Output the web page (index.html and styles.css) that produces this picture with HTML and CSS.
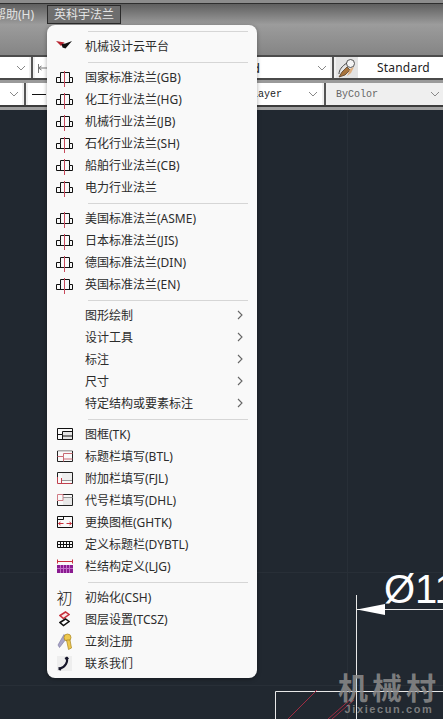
FILE: index.html
```html
<!DOCTYPE html>
<html lang="zh-CN">
<head>
    <meta charset="UTF-8">
    <meta name="viewport" content="width=device-width, initial-scale=1.0">
    <title>英科宇法兰</title>
    <link rel="stylesheet" href="styles.css">
</head>
<body>
    <svg class="defs" width="0" height="0">
        <symbol id="flange" viewBox="0 0 17 22">
            <path d="M.5 16.500v-5h4v-5h9v5h3v5z M4.500 11.500v5 M13.500 11.500v5" fill="none" stroke="#111"/>
            <path d="M8.500 5v16" stroke="#c8485a"/>
        </symbol>
        <symbol id="arrow" viewBox="0 0 6 10">
            <path d="M1 1l4 4-4 4" fill="none" stroke="#666" stroke-width="1.1"/>
        </symbol>
        <symbol id="down" viewBox="0 0 10 6">
            <path d="M1 1l4 4 4-4" fill="none" stroke="#888"/>
        </symbol>
    </svg>

    <div class="app">
        <div class="top-strip"></div>
        <div class="menubar">
            <span class="menubar-item clipped">帮助(H)</span>
            <span class="menubar-item active">英科宇法兰</span>
        </div>
        <div class="ribbon"></div>

        <div class="toolbar first">
            <div class="field w-28"><svg class="caret"><use href="#down"/></svg></div>
            <i class="divider"></i>
            <div class="field w-rest-1">
                <svg class="dim-icon" width="12" height="12" viewBox="0 0 12 12"><path d="M.5 2v9 M.5 6h11 M.5 6l3-2 M.5 6l3 2" fill="none" stroke="#777"/></svg>
                <span class="spacer"></span>
                <span class="field-text">rd</span>
                <svg class="caret"><use href="#down"/></svg>
            </div>
            <i class="divider"></i>
            <div class="brush">
                <svg width="20" height="20" viewBox="0 0 20 20">
                    <circle cx="13.500" cy="5.500" r="4" fill="#f4f4f4" stroke="#555"/>
                    <path d="M10 9l-5 5-3 5 6-2 5-5z" fill="#a8743c" stroke="#5a4028" stroke-width=".8"/>
                    <path d="M2 16c0-4 3-8 8-11" fill="none" stroke="#444"/>
                    <path d="M13 11l4-2-3 6-4 3z" fill="#e0b080"/>
                </svg>
            </div>
            <div class="field grow center">Standard</div>
        </div>
        <div class="toolbar-gap"></div>

        <div class="toolbar second">
            <div class="field w-20"><svg class="caret"><use href="#down"/></svg></div>
            <i class="divider"></i>
            <div class="field w-rest-2">
                <span class="line-sample"></span>
                <span class="spacer"></span>
                <span class="mono dark">Layer</span>
                <svg class="caret"><use href="#down"/></svg>
            </div>
            <i class="divider"></i>
            <div class="field grow disabled">
                <span class="mono">ByColor</span>
                <span class="spacer"></span>
                <svg class="caret"><use href="#down"/></svg>
            </div>
        </div>
        <div class="under-bar"></div>

        <div class="drawing">
            <svg class="sheet" width="443" height="609" viewBox="0 110 443 609">
                <path d="M0 572.500H443 M0 685.500H443 M347.500 110V719" stroke="#282f37"/>
                <path d="M356.500 595V719 M357 609.500H443 M275.500 719V691.500H443" fill="none" stroke="#e8e8e8"/>
                <path d="M357 609.500L385 604V615z" fill="#fff"/>
                <path d="M288 719L317 690 M328 719L352 698 M332 719L354 700" stroke="#a02c42"/>
                <text class="dim-text" x="384" y="603">Ø11</text>
            </svg>
            <div class="watermark">
                <div class="wm-big">机械村</div>
                <div class="wm-small">Jixiecun.com</div>
            </div>
        </div>

        <div class="menu">
            <div class="sep"></div>
            <div class="item">
                <span class="ico"><svg width="17" height="10" viewBox="0 0 17 10"><path d="M0 0l8.500 1.500L5 5z" fill="#b8242f"/><path d="M5.500 3l4-.5L16 0l-6.500 7.500-3-1z" fill="#111"/></svg></span>
                <span>机械设计云平台</span>
            </div>
            <div class="sep"></div>
            <div class="item"><span class="ico"><svg width="17" height="22"><use href="#flange"/></svg></span><span>国家标准法兰(GB)</span></div>
            <div class="item"><span class="ico"><svg width="17" height="22"><use href="#flange"/></svg></span><span>化工行业法兰(HG)</span></div>
            <div class="item"><span class="ico"><svg width="17" height="22"><use href="#flange"/></svg></span><span>机械行业法兰(JB)</span></div>
            <div class="item"><span class="ico"><svg width="17" height="22"><use href="#flange"/></svg></span><span>石化行业法兰(SH)</span></div>
            <div class="item"><span class="ico"><svg width="17" height="22"><use href="#flange"/></svg></span><span>船舶行业法兰(CB)</span></div>
            <div class="item"><span class="ico"><svg width="17" height="22"><use href="#flange"/></svg></span><span>电力行业法兰</span></div>
            <div class="sep"></div>
            <div class="item"><span class="ico"><svg width="17" height="22"><use href="#flange"/></svg></span><span>美国标准法兰(ASME)</span></div>
            <div class="item"><span class="ico"><svg width="17" height="22"><use href="#flange"/></svg></span><span>日本标准法兰(JIS)</span></div>
            <div class="item"><span class="ico"><svg width="17" height="22"><use href="#flange"/></svg></span><span>德国标准法兰(DIN)</span></div>
            <div class="item"><span class="ico"><svg width="17" height="22"><use href="#flange"/></svg></span><span>英国标准法兰(EN)</span></div>
            <div class="sep"></div>
            <div class="item"><span class="ico"></span><span>图形绘制</span><svg class="more"><use href="#arrow"/></svg></div>
            <div class="item"><span class="ico"></span><span>设计工具</span><svg class="more"><use href="#arrow"/></svg></div>
            <div class="item"><span class="ico"></span><span>标注</span><svg class="more"><use href="#arrow"/></svg></div>
            <div class="item"><span class="ico"></span><span>尺寸</span><svg class="more"><use href="#arrow"/></svg></div>
            <div class="item"><span class="ico"></span><span>特定结构或要素标注</span><svg class="more"><use href="#arrow"/></svg></div>
            <div class="sep"></div>
            <div class="item">
                <span class="ico"><svg width="16" height="12" viewBox="0 0 16 12"><path d="M6 4h9v7H6z" fill="#e4e4e4"/><path d="M.5.500h15v11H.5z M.5 6.500h5v-3h10 M5.500 6.500v5 M5.500 8h10" fill="none" stroke="#111"/></svg></span>
                <span>图框(TK)</span>
            </div>
            <div class="item">
                <span class="ico"><svg width="16" height="12" viewBox="0 0 16 12"><path d="M.5.500h15" stroke="#aaa" stroke-width="2"/><path d="M.5 1v10.500h15V1" fill="none" stroke="#222"/><path d="M.5 6.500h6v-3h9 M6.500 6.500v5 M6.500 9h9" fill="none" stroke="#c86a74"/></svg></span>
                <span>标题栏填写(BTL)</span>
            </div>
            <div class="item">
                <span class="ico"><svg width="16" height="12" viewBox="0 0 16 12"><path d="M5 1h10v8H5z" fill="#eee"/><path d="M.5 6V.500h15v11H5" fill="none" stroke="#222"/><path d="M.5 5v6.500h14 M4.500 6v5.500" fill="none" stroke="#c0404e"/><path d="M5 8.500h10" stroke="#999"/></svg></span>
                <span>附加栏填写(FJL)</span>
            </div>
            <div class="item">
                <span class="ico"><svg width="16" height="12" viewBox="0 0 16 12"><path d="M6 4h9v7H6z" fill="#e8e8e8"/><path d="M.5 7v4.500h15V.500H6" fill="none" stroke="#222"/><path d="M.5 6.500V.500h5.500v3 M.5 6.500h5.500v-3" fill="none" stroke="#d07a84"/><path d="M6 3.500h9.500" stroke="#999"/></svg></span>
                <span>代号栏填写(DHL)</span>
            </div>
            <div class="item">
                <span class="ico"><svg width="16" height="12" viewBox="0 0 16 12"><path d="M.5.500h15v11H.5z M.5 3.500h6v-3" fill="none" stroke="#111"/><path d="M1.500 7.500h5 M1.500 7.500l2-1.500 M1.500 7.500l2 1.500 M9.500 7.500h5 M14.500 7.500l-2-1.500 M14.500 7.500l-2 1.500" fill="none" stroke="#c8303c"/></svg></span>
                <span>更换图框(GHTK)</span>
            </div>
            <div class="item">
                <span class="ico"><svg width="16" height="7" viewBox="0 0 16 7"><path d="M.5.500h15v6H.5z M.5 3.500h15 M3.500.500v6 M6.500.500v6 M9.500.500v6 M12.500.500v6" fill="none" stroke="#111"/></svg></span>
                <span>定义标题栏(DYBTL)</span>
            </div>
            <div class="item">
                <span class="ico"><svg width="16" height="14" viewBox="0 0 16 14"><path d="M.5 4.500V.500M15.500 4.500V.500M.5 2.500h15" fill="none" stroke="#c8303c"/><path d="M0 6h16v8H0z" fill="#8a1a90"/><path d="M0 9.500h16M3.500 6v8M6.500 6v8M9.500 6v8M12.500 6v8" stroke="#c070c8"/></svg></span>
                <span>栏结构定义(LJG)</span>
            </div>
            <div class="sep"></div>
            <div class="item"><span class="ico glyph">初</span><span>初始化(CSH)</span></div>
            <div class="item">
                <span class="ico"><svg width="11" height="16" viewBox="0 0 11 16"><path d="M1 4.500L6.500 1 10 3.500 4.500 7.500z" fill="#f8e8e8" stroke="#c8303c" stroke-width="1.500"/><path d="M1 11.500L6.500 8 10 10.500 4.500 14.500z" fill="#fff" stroke="#111" stroke-width="1.500"/></svg></span>
                <span>图层设置(TCSZ)</span>
            </div>
            <div class="item">
                <span class="ico"><svg width="16" height="17" viewBox="0 0 16 17"><path d="M7 1.500L1 12l1.500 2.500L9 6z" fill="#a8a4c8" stroke="#77749a" stroke-width=".6"/><circle cx="10.500" cy="4.500" r="3.500" fill="#eec84e" stroke="#a88420" stroke-width=".7"/><path d="M9.500 7l2 9.500 3-1.500-1.500-8z" fill="#eec84e" stroke="#a88420" stroke-width=".7"/></svg></span>
                <span>立刻注册</span>
            </div>
            <div class="item">
                <span class="ico"><svg width="15" height="15" viewBox="0 0 15 15"><path d="M0 0h15v15H0z" fill="#eee"/><path d="M9.500 1.500c1.800 4-1 9.500-6.500 11" fill="none" stroke="#16162a" stroke-width="2.200"/><path d="M7.500 2l2.500-1.500 2 2-2.500 2z M1.500 11l3 .5-.5 3-2.500-.5z" fill="#16162a"/></svg></span>
                <span>联系我们</span>
            </div>
        </div>
    </div>
</body>
</html>
```

FILE: styles.css
```css
html, body {
    margin: 0;
    padding: 0;
    background: #212830;
}
.defs {
    display: block;
    height: 0;
}
.app {
    position: relative;
    display: flex;
    flex-direction: column;
    width: 443px;
    height: 719px;
    overflow: hidden;
    font-family: "Noto Sans", "Noto Sans CJK SC", sans-serif;
    font-size: 12px;
}
.top-strip {
    box-sizing: border-box;
    height: 4px;
    background: #8c8c8c;
    border-bottom: 1px solid #2e2e2e;
}
.menubar {
    display: flex;
    align-items: center;
    gap: 13px;
    height: 20px;
    background: linear-gradient(#5f5f5f, #9a9a9a);
    color: #e4e4e4;
}
.menubar-item.clipped {
    margin-left: -6px;
}
.menubar-item.active {
    box-sizing: border-box;
    width: 74px;
    height: 19px;
    line-height: 17px;
    text-align: center;
    background: #6e6e6e;
    border: 1px solid #2b2b2b;
}
.ribbon {
    height: 31px;
    background: linear-gradient(#9c9c9c, #858585);
    border-bottom: 2px solid #4c4c4c;
}
.toolbar {
    display: flex;
    align-items: stretch;
    background: #f0f0f0;
}
.toolbar.first {
    height: 21px;
}
.toolbar.second {
    height: 22px;
}
.toolbar-gap {
    height: 5px;
    background: linear-gradient(#4a4a4a 40%, #9a9a9a 40%);
}
.field {
    display: flex;
    align-items: center;
    box-sizing: border-box;
    padding-right: 3px;
    background: #fff;
}
.w-28 {
    width: 29px;
    justify-content: flex-end;
}
.w-20 {
    width: 22px;
    justify-content: flex-end;
}
.w-rest-1 {
    width: 295px;
    padding-left: 3px;
}
.w-rest-2 {
    width: 294px;
    padding-left: 4px;
    padding-right: 4px;
}
.grow {
    flex: 1;
}
.center {
    padding-left: 19px;
    font-family: "Noto Sans", sans-serif;
    font-size: 12px;
    color: #222;
    letter-spacing: .2px;
}
.disabled {
    padding-left: 8px;
    background: #efefef;
}
.spacer {
    flex: 1;
}
.caret {
    width: 10px;
    height: 6px;
}
.divider {
    flex: none;
    width: 2px;
    margin: 0 2px;
    background: #555;
}
.field-text {
    margin-right: 57px;
    font-size: 13px;
    color: #222;
}
.mono {
    font-family: "Liberation Mono", monospace;
    font-size: 10px;
    color: #666;
}
.mono.dark {
    margin-right: 26px;
    color: #222;
}
.line-sample {
    width: 14px;
    height: 1px;
    background: #111;
}
.brush {
    display: flex;
    align-items: center;
    justify-content: center;
    width: 22px;
    background: #e4e4e4;
}
.under-bar {
    height: 5px;
    background: linear-gradient(#3c3c3c 40%, #a0a0a0 40%);
}
.drawing {
    position: relative;
    flex: 1;
    background: #212830;
}
.sheet {
    position: absolute;
    top: 0;
    left: 0;
}
.dim-text {
    font-family: "Liberation Sans", sans-serif;
    font-size: 40px;
    fill: #fff;
}
.watermark {
    position: absolute;
    left: 336px;
    top: 560px;
    width: 106px;
    text-align: center;
    color: rgba(140, 140, 140, .85);
    font-weight: 700;
}
.wm-big {
    font-family: "Noto Sans CJK SC", sans-serif;
    font-size: 30px;
    line-height: 32px;
    letter-spacing: 4px;
}
.wm-small {
    margin-top: 1px;
    font-family: "Liberation Sans", sans-serif;
    font-size: 11px;
    line-height: 13px;
    letter-spacing: 1.600px;
}
.menu {
    position: absolute;
    left: 47px;
    top: 25px;
    box-sizing: border-box;
    width: 210px;
    height: 653px;
    padding: 1px 0 4px;
    background: #f9f9f9;
    border-radius: 8px;
    box-shadow: 0 1px 4px rgba(0, 0, 0, .35);
    color: #2c2c2c;
}
.sep {
    height: 9px;
    margin: 0 9px 0 41px;
    background: linear-gradient(#d6d6d6, #d6d6d6) 0 5px / 100% 1px no-repeat;
}
.item {
    display: flex;
    align-items: center;
    height: 22px;
    padding-left: 9px;
}
.ico {
    display: flex;
    align-items: center;
    justify-content: center;
    flex: none;
    width: 17px;
    height: 22px;
    margin-right: 12px;
}
.ico.glyph {
    font-family: "Noto Sans CJK SC", sans-serif;
    font-size: 16px;
    font-weight: 300;
    color: #222;
}
.more {
    width: 6px;
    height: 10px;
    margin-left: auto;
    margin-right: 14px;
}
```
